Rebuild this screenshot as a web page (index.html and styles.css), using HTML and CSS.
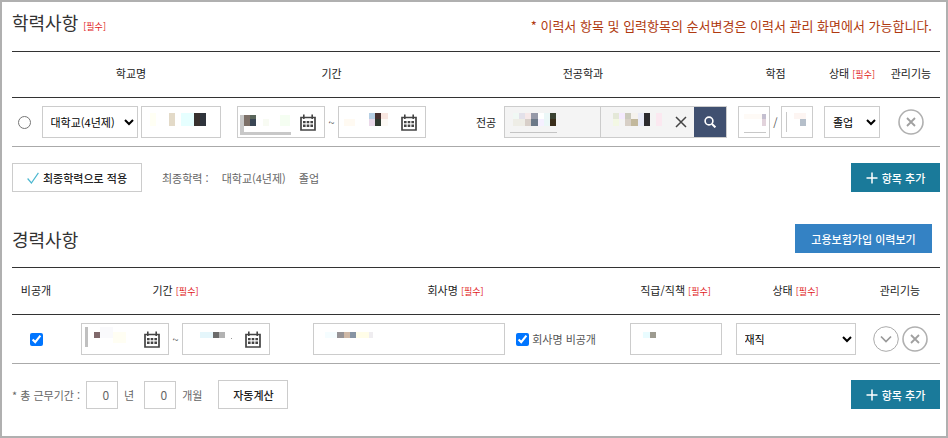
FILE: index.html
```html
<!DOCTYPE html>
<html lang="ko">
<head>
<meta charset="utf-8">
<meta name="viewport" content="width=device-width, initial-scale=1">
<title>이력서</title>
<link rel="stylesheet" href="styles.css">
</head>
<body>
<svg class="defs" aria-hidden="true">
  <symbol id="calendar" viewBox="0 0 16 17">
    <path d="M1 3.5H15V16H1Z" fill="none" stroke="#444" stroke-width="1.7"/>
    <path d="M3.8 0.5V5M12.2 0.5V5" stroke="#444" stroke-width="1.6"/>
    <path d="M3 7h2.6v2.3H3zM6.7 7h2.6v2.3H6.7zM10.4 7H13v2.3h-2.6zM3 10.6h2.6v2.3H3zM6.7 10.6h2.6v2.3H6.7zM10.4 10.6H13v2.3h-2.6z" fill="#444"/>
  </symbol>
  <symbol id="remove" viewBox="0 0 26 26">
    <circle cx="13" cy="13" r="12" fill="none" stroke="#b0b0b0" stroke-width="1.6"/>
    <path d="M9 9l8 8M17 9l-8 8" stroke="#a0a0a0" stroke-width="1.8"/>
  </symbol>
  <symbol id="expand" viewBox="0 0 26 26">
    <circle cx="13" cy="13" r="12.3" fill="none" stroke="#aaa" stroke-width="1"/>
    <path d="M8 10.5l5 5 5-5" fill="none" stroke="#999" stroke-width="1.7"/>
  </symbol>
  <symbol id="plus" viewBox="0 0 12 12">
    <path d="M6 0.5V11.5M0.5 6H11.5" stroke="#fff" stroke-width="1.5"/>
  </symbol>
</svg>
<main>
  <section>
    <header class="section-head">
      <h2>학력사항 <em>[필수]</em></h2>
      <p class="notice">* 이력서 항목 및 입력항목의 순서변경은 이력서 관리 화면에서 가능합니다.</p>
    </header>
    <table>
      <colgroup><col class="w-radio"><col class="w-school"><col class="w-term"><col><col class="w-grade"><col class="w-state"><col class="w-tool"></colgroup>
      <thead>
        <tr><td></td><th>학교명</th><th>기간</th><th>전공학과</th><th>학점</th><th>상태 <em>[필수]</em></th><th>관리기능</th></tr>
      </thead>
      <tbody>
        <tr>
          <td><div class="line"><input type="radio" name="final" aria-label="최종학력 선택"></div></td>
          <td><div class="line tight">
            <select class="school-type" aria-label="학교 구분"><option>대학교(4년제)</option></select>
            <div class="field school"><input type="text" aria-label="학교명">
              <svg class="mosaic"><path fill="#fffff4" d="M8 6h6v13H8z"/><path fill="#e3dac8" d="M27 6h6v13h-6z"/><path fill="#e6ffff" d="M39 6h13v13H39z"/><path fill="#38302e" d="M52 6h6v13h-6z"/><path fill="#2f343c" d="M58 6h6v13h-6z"/></svg>
            </div>
          </div></td>
          <td><div class="line term">
            <div class="field date"><input type="text" aria-label="입학일"><button type="button" aria-label="입학일 달력"><svg><use href="#calendar"/></svg></button>
              <svg class="mosaic"><path fill="#c8c8c8" d="M2 8h4v17h47v3H2z"/><path fill="#7d7068" d="M6 8h6v11H6z"/><path fill="#59655a" d="M12 8h6v4h-6z"/><path fill="#3a4654" d="M12 12h6v7h-6z"/><path fill="#f8fbf3" d="M25 12h6v7h-6z"/><path fill="#f5fef2" d="M42 8h10v11H42z"/></svg>
            </div>
            <span>~</span>
            <div class="field date"><input type="text" aria-label="졸업일"><button type="button" aria-label="졸업일 달력"><svg><use href="#calendar"/></svg></button>
              <svg class="mosaic"><path fill="#fffaf2" d="M5 12h11v7H5z"/><path fill="#b6cfe4" d="M30 6h6v6h-6z"/><path fill="#ead9ea" d="M30 12h6v7h-6z"/><path fill="#46302f" d="M36 6h6v6h-6z"/><path fill="#2f3a30" d="M36 12h6v7h-6z"/><path fill="#f8e6e0" d="M42 6h7v6h-7z"/><path fill="#fdf9f5" d="M42 12h7v7h-7z"/></svg>
            </div>
          </div></td>
          <td><div class="line major-line">
            <label for="major">전공</label>
            <div class="field major">
              <input id="major" type="text"><input class="second" type="text" aria-label="학과명">
              <button class="clear" type="button" aria-label="지우기"><svg viewBox="0 0 12 12"><path d="M1 1l10 10M11 1L1 11" stroke="#444" stroke-width="1.5"/></svg></button>
              <button class="search" type="button" aria-label="검색"><svg viewBox="0 0 12 12"><circle cx="5" cy="5" r="3.9" fill="none" stroke="#fff" stroke-width="1.6"/><path d="M8 8l3.4 3.4" stroke="#fff" stroke-width="2"/></svg></button>
              <svg class="mosaic"><path fill="#f0f8f4" d="M8 6h6v6H8z"/><path fill="#eeede6" d="M8 12h12v7H8z"/><path fill="#e3e1ea" d="M14 6h6v6h-6z"/><path fill="#f6e8e8" d="M20 6h6v6h-6z"/><path fill="#d8cfc9" d="M20 12h6v7h-6z"/><path fill="#9699a8" d="M26 6h7v6h-7z"/><path fill="#6c7988" d="M26 12h7v7h-7z"/><path fill="#fff" d="M33 6h6v6h-6z"/><path fill="#f5f0ff" d="M33 12h6v7h-6z"/><path fill="#ebf7f7" d="M39 6h6v13h-6z"/><path fill="#3b4232" d="M45 6h6v6h-6z"/><path fill="#3a2d1a" d="M45 12h6v7h-6z"/><path fill="#c4c4c4" d="M5 25h47v1H5z"/><path fill="#e4e8d8" d="M108 6h6v6h-6z"/><path fill="#f3f8e4" d="M108 12h6v7h-6z"/><path fill="#f5ebff" d="M114 6h6v6h-6z"/><path fill="#cbcabd" d="M120 6h6v6h-6z"/><path fill="#d7cfc6" d="M120 12h6v7h-6z"/><path fill="#f5f2ed" d="M126 6h7v6h-7z"/><path fill="#c2b89c" d="M126 12h7v7h-7z"/><path fill="#e9ebf8" d="M133 6h6v13h-6z"/><path fill="#2c2b2e" d="M139 6h6v13h-6z"/><path fill="#fbe8f0" d="M151 6h6v13h-6z"/></svg>
            </div>
          </div></td>
          <td><div class="line term">
            <div class="field short"><input type="text" aria-label="학점"><svg class="mosaic"><path fill="#fefaf6" d="M5 7h18v5H5z"/><path fill="#c4bfd0" d="M23 7h4v5h-4z"/><path fill="#e2d3dc" d="M23 12h4v7h-4z"/><path fill="#c8c8c8" d="M5 25h22v1H5z"/></svg></div>
            <span>/</span>
            <div class="field short"><input type="text" aria-label="만점"><svg class="mosaic"><path fill="#c8c8c8" d="M4 5h1v20H4z"/><path fill="#fdf5f2" d="M12 6h12v6H12z"/><path fill="#b5bfca" d="M18 12h6v7h-6z"/></svg></div>
          </div></td>
          <td><div class="line"><select class="state" aria-label="졸업 상태"><option>졸업</option></select></div></td>
          <td><div class="line"><button class="round" type="button" aria-label="학력 삭제"><svg><use href="#remove"/></svg></button></div></td>
        </tr>
      </tbody>
    </table>
    <div class="actions">
      <button class="btn apply" type="button"><svg viewBox="0 0 12 12"><path d="M0.6 6.5L4.4 11 11.4 0.8" fill="none" stroke="#4db8d0" stroke-width="1.2"/></svg>최종학력으로 적용</button>
      <p class="final"><span>최종학력 :</span><span>대학교(4년제)</span><span>졸업</span></p>
      <button class="btn add" type="button"><svg><use href="#plus"/></svg>항목 추가</button>
    </div>
  </section>

  <section class="career">
    <header class="section-head">
      <h2>경력사항</h2>
      <button class="btn history" type="button">고용보험가입 이력보기</button>
    </header>
    <table>
      <colgroup><col class="w-hide"><col class="w-period"><col><col class="w-rank"><col class="w-status"><col class="w-tools"></colgroup>
      <thead>
        <tr><th>비공개</th><th>기간 <em>[필수]</em></th><th>회사명 <em>[필수]</em></th><th>직급/직책 <em>[필수]</em></th><th>상태 <em>[필수]</em></th><th>관리기능</th></tr>
      </thead>
      <tbody>
        <tr>
          <td><div class="line"><input type="checkbox" checked aria-label="비공개"></div></td>
          <td><div class="line term">
            <div class="field date"><input type="text" aria-label="입사일"><button type="button" aria-label="입사일 달력"><svg><use href="#calendar"/></svg></button>
              <svg class="mosaic"><path fill="#c0c0c0" d="M3 3h3v20H3z"/><path fill="#80696b" d="M12 8h6v6h-6z"/><path fill="#fafafc" d="M18 3h13v11H18z"/><path fill="#fffef3" d="M31 8h13v11H31z"/></svg>
            </div>
            <span>~</span>
            <div class="field date"><input type="text" aria-label="퇴사일"><button type="button" aria-label="퇴사일 달력"><svg><use href="#calendar"/></svg></button>
              <svg class="mosaic"><path fill="#e5f6fb" d="M17 8h13v6H17z"/><path fill="#6b6b6b" d="M30 8h6v6h-6z"/><path fill="#b3b3b3" d="M36 8h6v6h-6z"/><path fill="#999" d="M48 14h1v1h-1z"/></svg>
            </div>
          </div></td>
          <td><div class="line company-line">
            <div class="field company"><input type="text" aria-label="회사명"><svg class="mosaic"><path fill="#f5fdff" d="M11 8h12v6H11z"/><path fill="#969396" d="M23 8h7v6h-7z"/><path fill="#ceb8a6" d="M30 8h6v6h-6z"/><path fill="#8794a3" d="M36 8h6v6h-6z"/><path fill="#fffde8" d="M42 8h13v6H42z"/><path fill="#efedf0" d="M55 8h4v6h-4z"/></svg></div>
            <label><input type="checkbox" checked>회사명 비공개</label>
          </div></td>
          <td><div class="line"><div class="field rank"><input type="text" aria-label="직급/직책"><svg class="mosaic"><path fill="#e9fcff" d="M12 8h7v6h-7z"/><path fill="#9d9b90" d="M19 8h6v6h-6z"/></svg></div></div></td>
          <td><div class="line"><select class="status" aria-label="재직 상태"><option>재직</option></select></div></td>
          <td><div class="line tight"><button class="round" type="button" aria-label="펼치기"><svg><use href="#expand"/></svg></button><button class="round" type="button" aria-label="경력 삭제"><svg><use href="#remove"/></svg></button></div></td>
        </tr>
      </tbody>
    </table>
    <div class="actions">
      <div class="total">
        <label for="years">* 총 근무기간 :</label><input id="years" type="text" value="0"><span>년</span>
        <input id="months" class="months" type="text" value="0"><label for="months">개월</label>
      </div>
      <button class="btn calc" type="button">자동계산</button>
      <button class="btn add" type="button"><svg><use href="#plus"/></svg>항목 추가</button>
    </div>
  </section>
</main>
</body>
</html>
```
FILE: styles.css
```css
* {
  box-sizing: border-box;
}

body {
  margin: 0;
  background: #fff;
  color: #222;
  font: 11px/16px "Noto Sans CJK KR", sans-serif;
}

main {
  min-height: 100vh;
  padding: 0 6px 24px 10px;
  border: 2px solid #b0b0b0;
}

h2,
p {
  margin: 0;
}

button,
input,
select {
  margin: 0;
  color: inherit;
  font: inherit;
}

button {
  padding: 0;
  border: 0;
  background: none;
  cursor: pointer;
}

svg {
  display: block;
}

.defs {
  position: absolute;
  width: 0;
  height: 0;
}

em {
  color: #e02020;
  font-size: 9px;
  font-style: normal;
  font-weight: 400;
  line-height: 1;
}

.section-head {
  display: flex;
  align-items: center;
  justify-content: space-between;
  padding: 7px 8px 16px 0;
}

.career .section-head {
  padding: 32px 8px 14px 0;
}

h2 {
  color: #333;
  font-size: 18px;
  font-weight: 400;
  line-height: 26px;
}

.notice {
  padding-top: 8px;
  color: #b03a10;
  font-size: 13px;
  line-height: 18px;
}

/* Tables */
table {
  width: 100%;
  border-top: 1px solid #333;
  border-spacing: 0;
  table-layout: fixed;
}

th,
td {
  height: 49px;
  padding: 0;
  border-bottom: 1px solid #aaa;
}

thead th,
thead td {
  height: 46px;
  padding-bottom: 3px;
  border-color: #333;
  font-weight: 400;
  white-space: nowrap;
}

.career thead th {
  height: 47px;
}

.w-radio { width: 24px; }
.w-school { width: 190px; }
.w-term { width: 211px; }
.w-grade { width: 93px; }
.w-state { width: 60px; }
.w-tool { width: 58px; }
.w-hide { width: 48px; }
.w-period { width: 231px; }
.w-rank { width: 111px; }
.w-status { width: 129px; }
.w-tools { width: 80px; }

.line {
  display: flex;
  align-items: center;
  justify-content: center;
}

.tight {
  gap: 3px;
}

.term span {
  flex: none;
  width: 13px;
  color: #555;
  text-align: center;
}

.term .short + span {
  width: 11px;
}

/* Form controls */
.field {
  position: relative;
  display: flex;
  align-items: center;
  height: 32px;
  border: 1px solid #ccc;
  background: #fff;
}

.field input {
  flex: 1;
  width: 0;
  min-width: 0;
  height: 100%;
  padding: 0 8px;
  border: 0;
  background: none;
}

.mosaic {
  position: absolute;
  top: 0;
  left: 0;
  width: 100%;
  height: 100%;
  pointer-events: none;
}

.date button {
  margin-right: 8px;
}

.date button svg {
  width: 16px;
  height: 17px;
}

.school { width: 80px; }
.date { width: 88px; }
.short { width: 32px; }
.rank { width: 92px; }

select {
  height: 32px;
  padding: 0 0 0 4px;
  border: 1px solid #ccc;
  border-radius: 0;
  background: #fff;
  color: #000;
}

.school-type { width: 96px; }
.state { width: 56px; }
.status { width: 120px; }

input[type="checkbox"],
input[type="radio"] {
  flex: none;
  width: 13px;
  height: 13px;
}

.major-line {
  gap: 8px;
  padding: 0 2px 0 39px;
}

.major-line label {
  flex: none;
}

.major {
  flex: 1;
  min-width: 0;
  background: #f4f4f4;
}

.major #major {
  flex: none;
  width: 43%;
}

.major .second {
  border-left: 1px solid #ccc;
}

.clear {
  margin-right: 7px;
}

.clear svg,
.search svg {
  width: 12px;
  height: 12px;
}

.search {
  display: grid;
  place-items: center;
  width: 32px;
  height: 100%;
  background: #405070;
}

.round svg {
  width: 26px;
  height: 26px;
}

.company-line {
  gap: 11px;
  padding: 0 24px 0 22px;
}

.company {
  flex: 1;
}

.company-line label {
  display: flex;
  align-items: center;
  gap: 3px;
  color: #555;
}

/* Rows of buttons under the tables */
.actions {
  display: flex;
  align-items: center;
  margin-top: 16px;
}

.btn {
  display: flex;
  align-items: center;
  justify-content: center;
  gap: 4px;
  height: 29px;
  padding: 0 12px;
  font-weight: 500;
}

.btn svg {
  width: 12px;
  height: 12px;
}

.apply,
.calc {
  border: 1px solid #ccc;
}

.apply {
  min-width: 130px;
}

.calc {
  min-width: 70px;
  margin-left: 16px;
}

.add {
  min-width: 89px;
  margin-left: auto;
  background: #1a7a9a;
  color: #fff;
}

.history {
  min-width: 137px;
  background: #3482c4;
  color: #fff;
}

.final {
  display: flex;
  gap: 13px;
  margin-left: 20px;
  color: #666;
}

.total {
  display: flex;
  align-items: center;
  gap: 6px;
  color: #666;
}

.total input {
  width: 32px;
  height: 28px;
  padding: 0 8px;
  border: 1px solid #ccc;
  font-size: 12px;
  text-align: right;
}

.total .months {
  margin-left: 4px;
}
```
